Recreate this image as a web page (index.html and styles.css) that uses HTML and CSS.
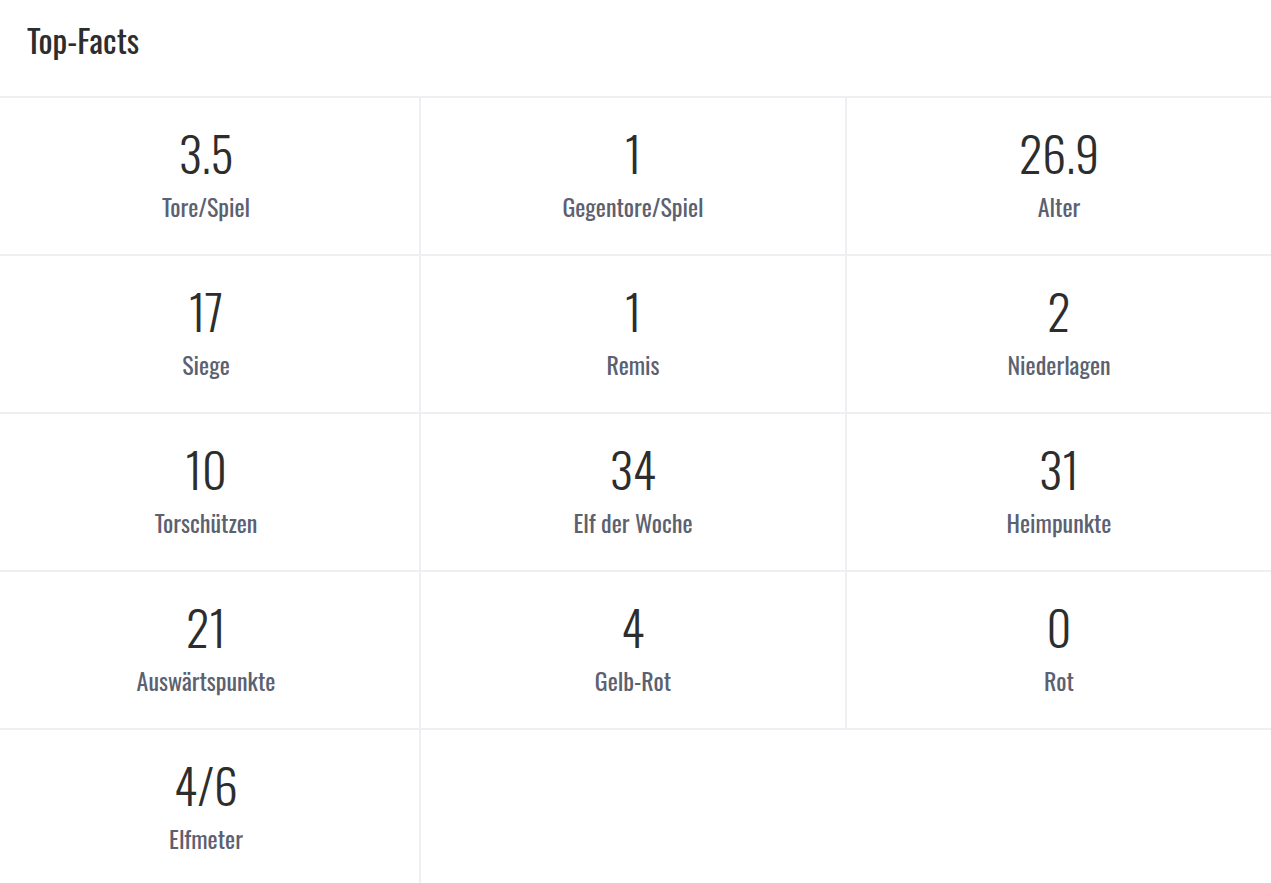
FILE: index.html
```html
<!DOCTYPE html>
<html lang="de">
<head>
<meta charset="utf-8">
<link rel="stylesheet" href="styles.css">
</head>
<body>
<div class="panel">
  <header class="panel-head">
    <h2 class="panel-title">Top-Facts</h2>
  </header>
  <div class="facts">
    <div class="fact"><div class="fact-value">3.5</div><div class="fact-label">Tore/Spiel</div></div>
    <div class="fact"><div class="fact-value">1</div><div class="fact-label">Gegentore/Spiel</div></div>
    <div class="fact"><div class="fact-value">26.9</div><div class="fact-label">Alter</div></div>
    <div class="fact"><div class="fact-value">17</div><div class="fact-label">Siege</div></div>
    <div class="fact"><div class="fact-value">1</div><div class="fact-label">Remis</div></div>
    <div class="fact"><div class="fact-value">2</div><div class="fact-label">Niederlagen</div></div>
    <div class="fact"><div class="fact-value">10</div><div class="fact-label">Torschützen</div></div>
    <div class="fact"><div class="fact-value">34</div><div class="fact-label">Elf der Woche</div></div>
    <div class="fact"><div class="fact-value">31</div><div class="fact-label">Heimpunkte</div></div>
    <div class="fact"><div class="fact-value">21</div><div class="fact-label">Auswärtspunkte</div></div>
    <div class="fact"><div class="fact-value">4</div><div class="fact-label">Gelb-Rot</div></div>
    <div class="fact"><div class="fact-value">0</div><div class="fact-label">Rot</div></div>
    <div class="fact"><div class="fact-value">4/6</div><div class="fact-label">Elfmeter</div></div>
  </div>
</div>
</body>
</html>
```
FILE: styles.css
```css
html, body {
  margin: 0;
  padding: 0;
  background: #fff;
  overflow: hidden;
}
body {
  font-family: "Oswald", "Liberation Sans Narrow", sans-serif;
  color: #333;
}
.panel {
  width: 1271px;
  overflow: hidden;
}
.panel-head {
  height: 98px;
  border-bottom: 2px solid #eeeef3;
  box-sizing: border-box;
  padding: 20px 27px 0;
}
.panel-title {
  margin: 0;
  font-size: 33px;
  line-height: 40px;
  font-weight: 400;
  color: #2d2d2d;
}
.facts {
  display: grid;
  grid-template-columns: repeat(3, 426px);
  margin-left: -5px;
  width: 1278px;
}
.fact {
  border-right: 2px solid #eeeef3;
  border-bottom: 2px solid #eeeef3;
  height: 158px;
  box-sizing: border-box;
  display: flex;
  flex-direction: column;
  align-items: center;
  padding-top: 27px;
}
.fact:nth-child(3n+1) {
  padding-right: 2px;
}
.fact-value {
  font-size: 48px;
  line-height: 56px;
  font-weight: 350;
  color: #2d2d2d;
}
.fact-label {
  margin-top: 10px;
  font-size: 24px;
  line-height: 30px;
  font-weight: 400;
  color: #5b6170;
}
```
